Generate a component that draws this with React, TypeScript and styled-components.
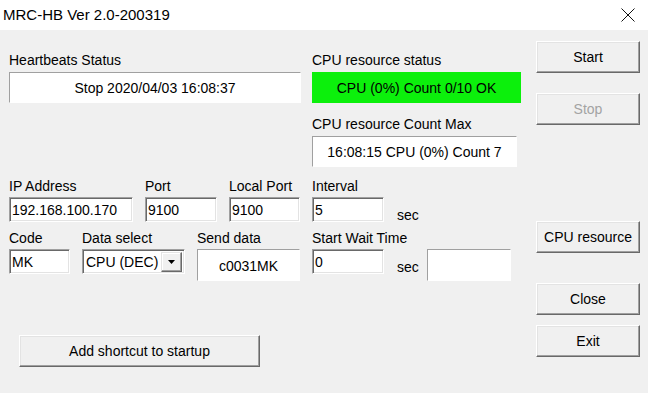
import React from "react";
import styled, { createGlobalStyle } from "styled-components";

const Global = createGlobalStyle`
  html, body { margin: 0; padding: 0; background: #ffffff; }
  * { box-sizing: border-box; }
`;

const Window = styled.div`
  width: 650px;
  height: 393px;
  background: #ffffff;
  display: flex;
  flex-direction: column;
  font-family: "Liberation Sans", Arial, sans-serif;
  font-size: 14px;
  color: #000;
  overflow: hidden;
`;

const TitleBar = styled.div`
  height: 30px;
  flex: none;
  display: flex;
  align-items: center;
  justify-content: space-between;
  padding: 0 15px 0 3px;
`;

const Title = styled.span`
  font-size: 15px;
  line-height: 18px;
  color: #000;
`;

const Body = styled.div`
  flex: 1;
  background: #f0f0f0;
  margin-right: 2px;
  display: flex;
`;

const Form = styled.div`
  flex: 1;
  display: flex;
  flex-direction: column;
  align-items: flex-start;
  padding: 22px 0 0 9px;
`;

const Side = styled.div`
  width: 104px;
  margin-right: 8px;
  padding-top: 11px;
  display: flex;
  flex-direction: column;
`;

const StatusRow = styled.div`
  display: flex;
  gap: 11px;
`;

const Column = styled.div<{ $w: number }>`
  width: ${(p) => p.$w}px;
  display: flex;
  flex-direction: column;
  align-items: flex-start;
`;

const Label = styled.span<{ $gap?: number; $top?: number }>`
  display: block;
  height: 16px;
  line-height: 16px;
  white-space: nowrap;
  margin-top: ${(p) => p.$top ?? 0}px;
  margin-bottom: ${(p) => p.$gap ?? 3}px;
`;

const StaticBox = styled.div<{ $w: number; $h?: number }>`
  width: ${(p) => p.$w}px;
  height: ${(p) => p.$h ?? 31}px;
  background: #ffffff;
  border-style: solid;
  border-width: 1px;
  border-color: #a0a0a0 #ffffff #ffffff #a0a0a0;
  display: flex;
  align-items: center;
  justify-content: center;
  white-space: nowrap;
  padding-top: 1px;
`;

const BlankBox = styled(StaticBox)`
  margin-left: 8px;
`;

const GreenBox = styled.div`
  width: 209px;
  height: 31px;
  background: #0cf00c;
  display: flex;
  align-items: center;
  justify-content: center;
  white-space: nowrap;
  padding-top: 1px;
`;

const FieldRow = styled.div<{ $top: number }>`
  display: flex;
  align-items: flex-start;
  gap: 12px;
  margin-top: ${(p) => p.$top}px;
`;

const Field = styled.div`
  display: flex;
  flex-direction: column;
  align-items: flex-start;
`;

const ControlRow = styled.div`
  display: flex;
  align-items: flex-start;
`;

const TextInput = styled.input<{ $w: number }>`
  width: ${(p) => p.$w}px;
  height: 25px;
  margin: 0;
  padding: 1px 2px 0;
  font: inherit;
  font-size: 14px;
  color: #000;
  background: #ffffff;
  border-style: solid;
  border-width: 1px;
  border-color: #a0a0a0 #ffffff #ffffff #a0a0a0;
  box-shadow: inset 1px 1px 0 #696969, inset -1px -1px 0 #e3e3e3;
  outline: none;
`;

const Unit = styled.span`
  height: 25px;
  margin-left: 13px;
  display: flex;
  align-items: flex-end;
  line-height: 13px;
  font-size: 14px;
`;

const Combo = styled.div<{ $w: number }>`
  width: ${(p) => p.$w}px;
  height: 25px;
  display: flex;
  align-items: stretch;
  background: #ffffff;
  border-style: solid;
  border-width: 1px;
  border-color: #a0a0a0 #ffffff #ffffff #a0a0a0;
  box-shadow: inset 1px 1px 0 #696969, inset -1px -1px 0 #e3e3e3;
  padding: 2px 2px 1px 2px;
`;

const ComboText = styled.span`
  flex: 1;
  display: flex;
  align-items: center;
  padding-left: 1px;
  white-space: nowrap;
`;

const ComboArrow = styled.span`
  width: 21px;
  display: flex;
  align-items: center;
  justify-content: center;
  background: #f0f0f0;
  border-style: solid;
  border-width: 1px;
  border-color: #e3e3e3 #696969 #696969 #e3e3e3;
  box-shadow: inset -1px -1px 0 #a0a0a0, inset 1px 1px 0 #ffffff;
`;

const Button = styled.button<{ $w?: number; $top?: number; $disabled?: boolean }>`
  width: ${(p) => p.$w ?? 104}px;
  height: 32px;
  margin: ${(p) => p.$top ?? 0}px 0 0 0;
  padding: 0 0 1px;
  font: inherit;
  font-size: 14px;
  color: ${(p) => (p.$disabled ? "#a3a3a3" : "#000")};
  background: #f0f0f0;
  border-style: solid;
  border-width: 1px;
  border-color: #ffffff #696969 #696969 #ffffff;
  box-shadow: inset -1px -1px 0 #a0a0a0, inset 1px 1px 0 #e3e3e3;
  cursor: default;
  flex: none;
`;

const ShortcutButton = styled(Button)`
  margin: 54px 0 0 10px;
`;

const CloseIcon = () => (
  <svg width="14" height="14" viewBox="0 0 14 14">
    <path d="M0.5 0.5 L13.5 13.5 M13.5 0.5 L0.5 13.5" stroke="#111" strokeWidth="1" fill="none" />
  </svg>
);

const ArrowDown = () => (
  <svg width="8" height="5" viewBox="0 0 8 5">
    <path d="M0 0 H7 L3.5 4 Z" fill="#000" />
  </svg>
);

export default function App() {
  return (
    <>
      <Global />
      <Window>
        <TitleBar>
          <Title>MRC-HB Ver 2.0-200319</Title>
          <CloseIcon />
        </TitleBar>
        <Body>
          <Form>
            <StatusRow>
              <Column $w={292}>
                <Label $gap={4}>Heartbeats Status</Label>
                <StaticBox $w={292}>Stop 2020/04/03 16:08:37</StaticBox>
              </Column>
              <Column $w={210}>
                <Label $gap={4}>CPU resource status</Label>
                <GreenBox>CPU (0%) Count 0/10 OK</GreenBox>
                <Label $gap={4} $top={13}>CPU resource Count Max</Label>
                <StaticBox $w={205}>16:08:15 CPU (0%) Count 7</StaticBox>
              </Column>
            </StatusRow>

            <FieldRow $top={11}>
              <Field>
                <Label>IP Address</Label>
                <TextInput $w={124} readOnly defaultValue="192.168.100.170" />
              </Field>
              <Field>
                <Label>Port</Label>
                <TextInput $w={72} readOnly defaultValue="9100" />
              </Field>
              <Field>
                <Label>Local Port</Label>
                <TextInput $w={71} readOnly defaultValue="9100" />
              </Field>
              <Field>
                <Label>Interval</Label>
                <ControlRow>
                  <TextInput $w={72} readOnly defaultValue="5" />
                  <Unit>sec</Unit>
                </ControlRow>
              </Field>
            </FieldRow>

            <FieldRow $top={8}>
              <Field>
                <Label>Code</Label>
                <TextInput $w={61} readOnly defaultValue="MK" />
              </Field>
              <Field>
                <Label>Data select</Label>
                <Combo $w={103}>
                  <ComboText>CPU (DEC)</ComboText>
                  <ComboArrow>
                    <ArrowDown />
                  </ComboArrow>
                </Combo>
              </Field>
              <Field>
                <Label>Send data</Label>
                <StaticBox $w={103} $h={32}>c0031MK</StaticBox>
              </Field>
              <Field>
                <Label>Start Wait Time</Label>
                <ControlRow>
                  <TextInput $w={72} readOnly defaultValue="0" />
                  <Unit>sec</Unit>
                  <BlankBox $w={84} $h={32} />
                </ControlRow>
              </Field>
            </FieldRow>

            <ShortcutButton $w={241}>Add shortcut to startup</ShortcutButton>
          </Form>

          <Side>
            <Button>Start</Button>
            <Button $top={20} $disabled>Stop</Button>
            <Button $top={96}>CPU resource</Button>
            <Button $top={30}>Close</Button>
            <Button $top={10}>Exit</Button>
          </Side>
        </Body>
      </Window>
    </>
  );
}
